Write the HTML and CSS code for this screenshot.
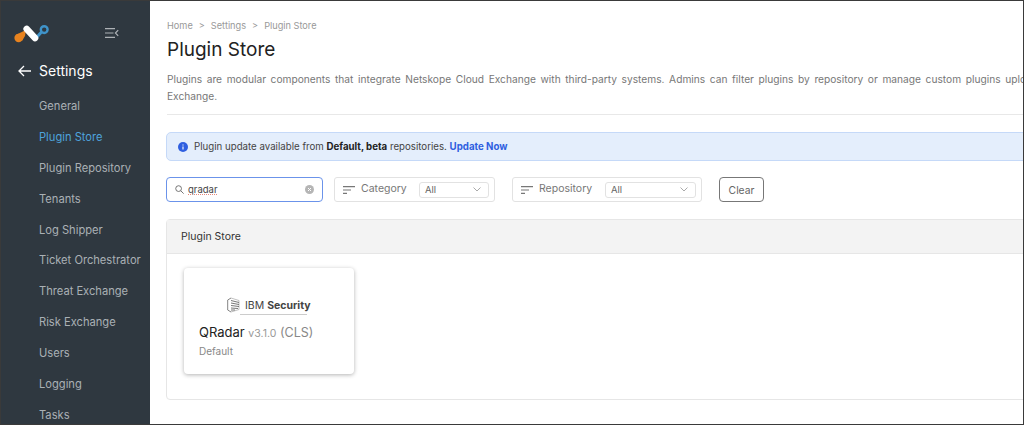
FILE: index.html
```html
<!DOCTYPE html>
<html lang="en">
<head>
    <meta charset="UTF-8">
    <meta name="viewport" content="width=device-width, initial-scale=1.0">
    <title>Plugin Store</title>
    <link rel="stylesheet" href="styles.css">
</head>
<body>
    <div class="app">
        <aside class="sidebar">
            <div class="brand">
                <svg class="logo" width="36" height="20" viewBox="14 24 36 20">
                    <circle cx="18.6" cy="38" r="4.2" fill="#e8831f"/>
                    <path d="M15.5 35 L26 30 L25 36 L22 41Z" fill="#e8831f"/>
                    <path d="M36 38 L42 31.5" stroke="#3f93c9" stroke-width="3" fill="none"/>
                    <circle cx="44.2" cy="29.6" r="3.4" fill="#2f3840" stroke="#3f93c9" stroke-width="2.4"/>
                    <path d="M26.7 29 L35 38" stroke="#fff" stroke-width="6.6" stroke-linecap="round" fill="none"/>
                </svg>
                <svg class="collapse" width="14" height="10" viewBox="0 0 14 10">
                    <path d="M0 .7h10M0 5h8.5M0 9.3h10" stroke="#aeb2b6" stroke-width="1.2" fill="none"/>
                    <path d="M13.2 2.2L10.4 5L13.2 7.8" stroke="#aeb2b6" stroke-width="1.2" fill="none"/>
                </svg>
            </div>
            <div class="back">
                <svg width="13" height="12" viewBox="0 0 13 12">
                    <path d="M6 1L1 6L6 11M1 6H13" stroke="#fff" stroke-width="1.3" fill="none"/>
                </svg>
                <span>Settings</span>
            </div>
            <nav class="nav">
                <a>General</a>
                <a class="active">Plugin Store</a>
                <a>Plugin Repository</a>
                <a>Tenants</a>
                <a>Log Shipper</a>
                <a>Ticket Orchestrator</a>
                <a>Threat Exchange</a>
                <a>Risk Exchange</a>
                <a>Users</a>
                <a>Logging</a>
                <a>Tasks</a>
            </nav>
        </aside>

        <main class="content">
            <header class="page-head">
                <div class="crumbs">
                    <span>Home</span><span>&gt;</span><span>Settings</span><span>&gt;</span><span>Plugin Store</span>
                </div>
                <h1>Plugin Store</h1>
                <p class="intro">Plugins are modular components that integrate Netskope Cloud Exchange with third-party systems. Admins can filter plugins by repository or manage custom plugins uploaded to Cloud<br>Exchange.</p>
            </header>

            <div class="notice">
                <svg width="10" height="10" viewBox="0 0 10 10">
                    <circle cx="5" cy="5" r="5" fill="#2f5fe0"/>
                    <path d="M5 4.4V7.6M5 2.4V3.4" stroke="#fff" stroke-width="1.1"/>
                </svg>
                <span>Plugin update available from <b>Default, beta</b> repositories. <a>Update Now</a></span>
            </div>

            <div class="filters">
                <div class="search">
                    <svg width="9" height="9" viewBox="0 0 10 10">
                        <circle cx="4" cy="4" r="3.2" fill="none" stroke="#666" stroke-width="1"/>
                        <path d="M6.4 6.4L9.6 9.6" stroke="#666" stroke-width="1"/>
                    </svg>
                    <span class="term">qradar</span>
                    <svg class="clear-x" width="9" height="9" viewBox="0 0 9 9">
                        <circle cx="4.5" cy="4.5" r="4.5" fill="#b5b5b5"/>
                        <path d="M3 3L6 6M6 3L3 6" stroke="#fff" stroke-width="1"/>
                    </svg>
                </div>
                <div class="filter category">
                    <svg width="12" height="8" viewBox="0 0 12 8">
                        <path d="M0 .7H12M0 4H8M0 7.3H4" stroke="#777" stroke-width="1.2"/>
                    </svg>
                    <span class="filter-label">Category</span>
                    <div class="select">
                        <span>All</span>
                        <svg width="8" height="5" viewBox="0 0 8 5"><path d="M.5 .5L4 4L7.5 .5" stroke="#aaa" fill="none"/></svg>
                    </div>
                </div>
                <div class="filter repository">
                    <svg width="12" height="8" viewBox="0 0 12 8">
                        <path d="M0 .7H12M0 4H8M0 7.3H4" stroke="#777" stroke-width="1.2"/>
                    </svg>
                    <span class="filter-label">Repository</span>
                    <div class="select">
                        <span>All</span>
                        <svg width="8" height="5" viewBox="0 0 8 5"><path d="M.5 .5L4 4L7.5 .5" stroke="#aaa" fill="none"/></svg>
                    </div>
                </div>
                <button class="clear">Clear</button>
            </div>

            <section class="panel">
                <div class="panel-head">Plugin Store</div>
                <div class="panel-body">
                    <div class="card">
                        <div class="card-logo">
                            <div class="ibm">
                                <svg width="13" height="16" viewBox="0 0 13 16">
                                    <path d="M4 1L.7 3V13L4 15" stroke="#777" stroke-width=".9" fill="none"/>
                                    <path d="M4 1L12 3.5V12.5L4 15" fill="none" stroke="#999" stroke-width=".6"/>
                                    <path d="M4 3.5L12 5.5M4 6L12 7.5M4 8.5L12 9.5M4 11L11 11.5M4 13L8 13" stroke="#666" stroke-width=".9" fill="none"/>
                                </svg>
                                <span>IBM <b>Security</b></span>
                            </div>
                            <div class="ibm-rule"></div>
                        </div>
                        <div class="card-title">QRadar <small>v3.1.0</small> <em>(CLS)</em></div>
                        <div class="card-repo">Default</div>
                    </div>
                </div>
            </section>
        </main>
    </div>
</body>
</html>
```

FILE: styles.css
```css
* {
    box-sizing: border-box;
}

html, body {
    margin: 0;
    height: 100%;
    overflow: hidden;
}

body {
    font-family: Inter, "Liberation Sans", sans-serif;
    color: #222;
    background: #fff;
}

.app {
    display: flex;
    width: 1024px;
    height: 425px;
    border: 1px solid #3a3a3a;
    overflow: hidden;
}

/* Sidebar */
.sidebar {
    flex: none;
    width: 149px;
    background: #2f3840;
    color: #aab0b5;
}

.brand {
    display: flex;
    align-items: center;
    justify-content: space-between;
    padding: 23px 31px 0 13px;
}

.collapse {
    margin-top: -3px;
}

.back {
    display: flex;
    align-items: center;
    gap: 8px;
    margin-top: 18px;
    padding-left: 17px;
    color: #fff;
    font-size: 14px;
}

.nav {
    margin-top: 12px;
}

.nav a {
    display: block;
    height: 30.9px;
    line-height: 30.9px;
    padding-left: 38px;
    font-size: 11.15px;
    white-space: nowrap;
}

.nav a.active {
    color: #4ea3dc;
}

/* Main area */
.content {
    flex: none;
    width: 890px;
    padding: 19px 0 0 16px;
}

.page-head {
    padding-left: 1px;
}

.crumbs {
    display: flex;
    gap: 6px;
    font-size: 9.2px;
    line-height: 12px;
    color: #999;
}

h1 {
    margin: 4px 0 0;
    font-size: 19px;
    line-height: 28px;
    font-weight: 400;
    color: #222;
}

.intro {
    margin: 7px 0 0;
    padding-bottom: 10px;
    border-bottom: 1px solid #e8e8e8;
    font-size: 10.2px;
    line-height: 16.5px;
    word-spacing: 1.75px;
    white-space: nowrap;
    color: #777;
}

.notice {
    display: flex;
    align-items: center;
    gap: 6px;
    height: 29px;
    margin-top: 17px;
    padding-left: 11px;
    background: #e4eefc;
    border: 1px solid #c5d9f8;
    border-radius: 5px;
    font-size: 9.7px;
    color: #444;
}

.notice b {
    color: #222;
}

.notice a {
    color: #2f5fe0;
    font-weight: 700;
}

.filters {
    display: flex;
    align-items: flex-start;
    margin-top: 16px;
}

.search {
    display: flex;
    align-items: center;
    gap: 4px;
    width: 157px;
    height: 25px;
    padding: 0 8px;
    border: 1px solid #6b93ea;
    border-radius: 4px;
    font-size: 9.5px;
    color: #444;
}

.term {
    flex: 1;
    text-decoration: underline dotted #e58a7e 1px;
}

.filter {
    display: flex;
    align-items: center;
    height: 25px;
    border: 1px solid #e2e2e2;
    border-radius: 3px;
    padding: 0 5px 0 8px;
    font-size: 10.5px;
    color: #777;
}

.category {
    width: 161px;
    margin-left: 11px;
}

.repository {
    width: 190px;
    margin-left: 17px;
}

.filter-label {
    flex: 1;
    margin: 0 0 3px 6px;
}

.select {
    display: flex;
    align-items: center;
    justify-content: space-between;
    height: 16px;
    padding: 0 7px 0 5px;
    border: 1px solid #e2e2e2;
    border-radius: 3px;
    font-size: 9.5px;
    color: #666;
}

.category .select {
    width: 70px;
}

.repository .select {
    width: 91px;
}

.clear {
    width: 45px;
    height: 25px;
    margin-left: 17px;
    padding: 0;
    background: #fff;
    border: 1px solid #777;
    border-radius: 4px;
    font: inherit;
    font-size: 10.3px;
    color: #666;
}

/* Plugin panel */
.panel {
    margin-top: 17px;
    height: 181px;
    border: 1px solid #e6e6e6;
    border-radius: 4px;
}

.panel-head {
    height: 34px;
    line-height: 34px;
    padding-left: 14px;
    background: #f3f3f3;
    border-bottom: 1px solid #e6e6e6;
    font-size: 10.5px;
    color: #333;
}

.panel-body {
    padding: 14px 17px;
}

.card {
    width: 170px;
    height: 106px;
    padding: 0 15px;
    border-radius: 4px;
    background: #fff;
    box-shadow: 0 1px 4px rgba(0, 0, 0, 0.3);
}

.card-logo {
    width: 84px;
    margin-left: 28px;
    padding-top: 29px;
}

.ibm {
    display: flex;
    align-items: center;
    gap: 5px;
    height: 16px;
    font-size: 10.5px;
    white-space: nowrap;
    color: #444;
}

.ibm-rule {
    width: 67px;
    height: 1px;
    margin: 1px 0 0 13px;
    background: #ccc;
}

.card-title {
    margin-top: 8px;
    font-size: 13px;
    line-height: 18px;
    color: #222;
}

.card-title small {
    font-size: 10.5px;
    color: #999;
}

.card-title em {
    font-style: normal;
    font-size: 12.5px;
    color: #888;
}

.card-repo {
    margin-top: 1px;
    font-size: 10px;
    line-height: 14px;
    color: #888;
}
```
